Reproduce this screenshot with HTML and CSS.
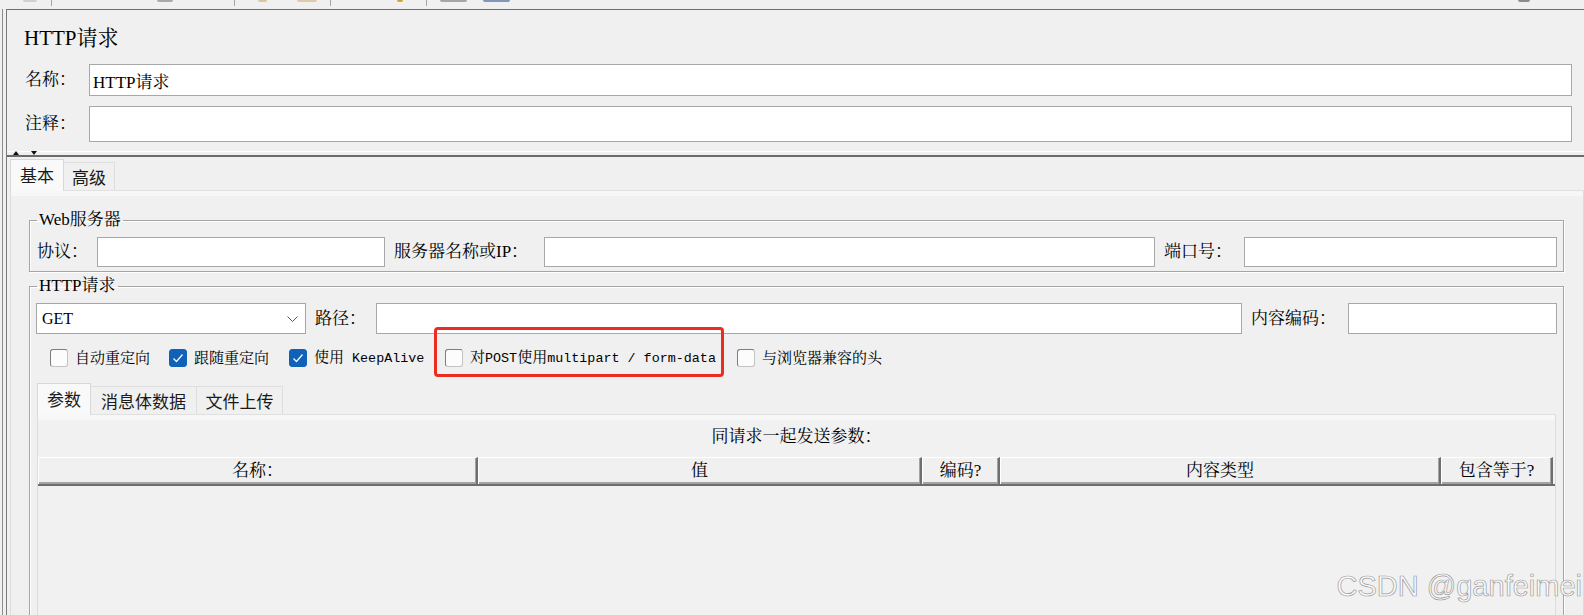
FILE: index.html
```html
<!DOCTYPE html>
<html>
<head>
    <title>HTTP请求</title>
    <meta http-equiv="content-type" content="text/html; charset=UTF-8"/>
    <link rel="stylesheet" href="styles.css">
</head>
<body>
<div class="toolbar">
    <span class="tool tool-new"></span>
    <span class="sep sep-file"></span>
    <span class="tool tool-save"></span>
    <span class="sep sep-edit"></span>
    <span class="tool tool-cut"></span>
    <span class="tool tool-copy"></span>
    <span class="sep sep-run"></span>
    <span class="tool tool-start"></span>
    <span class="sep sep-clear"></span>
    <span class="tool tool-clear"></span>
    <span class="tool tool-search"></span>
    <span class="tool tool-help"></span>
</div>
<div class="workspace">
    <div class="tree-edge"></div>
    <div class="pane">
        <div class="sampler-head">
            <h1 class="title">HTTP请求</h1>
            <div class="field-row name-row">
                <label>名称：</label>
                <input type="text" value="HTTP请求"/>
            </div>
            <div class="field-row comment-row">
                <label>注释：</label>
                <input type="text"/>
            </div>
        </div>
        <div class="splitter">
            <span class="arrow up"></span>
            <span class="arrow down"></span>
        </div>
        <div class="tab-strip">
            <span class="tab active tab-basic">基本</span>
            <span class="tab tab-advanced">高级</span>
        </div>
        <div class="tab-panel main-panel">
            <fieldset class="group web-server">
                <legend>Web服务器</legend>
                <div class="server-row">
                    <label>协议：</label>
                    <input type="text"/>
                    <label class="trailing">服务器名称或IP：</label>
                    <input type="text"/>
                    <label class="trailing">端口号：</label>
                    <input type="text"/>
                </div>
            </fieldset>
            <fieldset class="group http-request">
                <legend>HTTP请求</legend>
                <div class="path-row">
                    <div class="combo">
                        <span>GET</span>
                        <svg width="11" height="6" viewBox="0 0 11 6"><polyline points="0.5,0.5 5.5,5.5 10.5,0.5" fill="none" stroke="#555" stroke-width="1"/></svg>
                    </div>
                    <label class="trailing">路径：</label>
                    <input type="text"/>
                    <label class="trailing">内容编码：</label>
                    <input type="text"/>
                </div>
                <div class="option-row">
                    <label class="check"><span class="box"></span>自动重定向</label>
                    <label class="check"><span class="box on"><svg width="16" height="16" viewBox="0 0 16 16"><polyline points="3.5,8.5 6.5,11.5 12.5,4.5" fill="none" stroke="#fff" stroke-width="1.2"/></svg></span>跟随重定向</label>
                    <label class="check"><span class="box on"><svg width="16" height="16" viewBox="0 0 16 16"><polyline points="3.5,8.5 6.5,11.5 12.5,4.5" fill="none" stroke="#fff" stroke-width="1.2"/></svg></span><span>使用<span class="mono"> KeepAlive</span></span></label>
                    <label class="check marked"><span class="box"></span><span>对<span class="mono">POST</span>使用<span class="mono">multipart / form-data</span></span></label>
                    <label class="check"><span class="box"></span>与浏览器兼容的头</label>
                </div>
                <div class="subtabs">
                    <div class="tab-strip sub-strip">
                        <span class="tab active tab-params">参数</span>
                        <span class="tab tab-body">消息体数据</span>
                        <span class="tab tab-files">文件上传</span>
                    </div>
                    <div class="tab-panel params-panel">
                        <div class="caption">同请求一起发送参数：</div>
                        <div class="table-head">
                            <span>名称：</span>
                            <span>值</span>
                            <span>编码?</span>
                            <span>内容类型</span>
                            <span>包含等于?</span>
                        </div>
                    </div>
                </div>
            </fieldset>
        </div>
    </div>
</div>
<div class="watermark">CSDN @ganfeimei</div>
</body>
</html>
```
FILE: styles.css
```css
html {
    height: 100%;
}

body {
    position: relative;
    height: 615px;
    margin: 0;
    overflow: hidden;
    background-color: #f0f0f0;
    color: #000;
    font-family: "Liberation Serif", "Noto Serif CJK SC", "Noto Sans CJK SC", serif;
    font-size: 17px;
    line-height: 20px;
}

/* toolbar, only the lower edge of its icons shows */
.toolbar {
    display: flex;
    align-items: flex-start;
    height: 9px;
}

.tool {
    height: 2px;
    border-radius: 0 0 2px 2px;
}

.sep {
    width: 1px;
    height: 6px;
    background-color: #a3a3a3;
}

.tool-new { margin-left: 23px; width: 14px; background-color: #d0d0d0; }
.sep-file { margin-left: 14px; }
.tool-save { margin-left: 105px; width: 16px; background-color: #a9a9a9; }
.sep-edit { margin-left: 61px; }
.tool-cut { margin-left: 23px; width: 9px; background-color: #dcc6a2; }
.tool-copy { margin-left: 30px; width: 20px; background-color: #dfcaa8; }
.sep-run { margin-left: 13px; }
.tool-start { margin-left: 66px; width: 6px; background-color: #d2a62c; }
.sep-clear { margin-left: 23px; }
.tool-clear { margin-left: 13px; width: 27px; background-color: #a5a5a5; }
.tool-search { margin-left: 16px; width: 27px; background-color: #8396b8; }
.tool-help { margin-left: auto; margin-right: 54px; width: 12px; background-color: #8c8c8c; }

.workspace {
    display: flex;
    height: 606px;
}

.tree-edge {
    width: 2px;
    border-right: 1px solid #8c8c8c;
    margin-right: 3px;
}

.pane {
    flex: 1;
    min-width: 0;
    border-left: 1px solid #7a7a7a;
    border-top: 1px solid #6e6e6e;
    overflow: hidden;
}

input {
    box-sizing: border-box;
    height: 100%;
    margin: 0;
    padding: 0 3px;
    border: 1px solid #a8a8a8;
    background-color: #fff;
    font: inherit;
    outline: none;
}

/* name and comment */
.sampler-head {
    padding: 0 12px 0 17px;
}

.title {
    margin: 14px 0 0;
    font-size: 21px;
    line-height: 28px;
    font-weight: normal;
}

.field-row {
    display: grid;
    grid-template-columns: 65px 1fr;
    align-items: center;
}

.field-row label {
    padding-left: 1px;
}

.name-row {
    margin-top: 12px;
    height: 32px;
}

.comment-row {
    margin-top: 10px;
    height: 36px;
}

.splitter {
    position: relative;
    display: flex;
    align-items: flex-end;
    gap: 12px;
    margin-top: 1px;
    height: 12px;
    padding-left: 6px;
    border-bottom: 2px solid #6b6b6b;
}

.splitter::before {
    content: "";
    position: absolute;
    left: 0;
    right: 0;
    top: 8px;
    height: 1px;
    background-color: #fff;
}

.arrow {
    position: relative;
    width: 0;
    height: 0;
    border-left: 3px solid transparent;
    border-right: 3px solid transparent;
}

.arrow.up { border-bottom: 4px solid #111; }
.arrow.down { border-top: 4px solid #111; }

/* tabs */
.tab-strip {
    display: flex;
    align-items: flex-end;
    height: 33px;
    margin-left: 3px;
}

.tab {
    box-sizing: border-box;
    height: 28px;
    line-height: 27px;
    text-align: center;
    font-family: "Noto Sans CJK SC", sans-serif;
    font-size: 17px;
    color: #1a1a1a;
    background-color: #f0f0f0;
    border: 1px solid #dedede;
    border-left: none;
    border-bottom: none;
}

.tab.active {
    position: relative;
    height: 32px;
    line-height: 30px;
    margin-bottom: -1px;
    background-color: #f9f9f9;
    border-left: 1px solid #d8d8d8;
    border-color: #d8d8d8;
}

.tab-basic { width: 54px; }
.tab-advanced { width: 51px; }
.tab-params { width: 54px; }
.tab-body { width: 106px; }
.tab-files { width: 86px; }

.tab-panel {
    border: 1px solid #dcdcdc;
    border-top-color: #e0e0e0;
    box-shadow: inset 0 5px 0 #f7f7f7;
}

.main-panel {
    margin-left: 3px;
    height: 430px;
    padding: 0 19px 0 18px;
}

/* etched group boxes */
.group {
    min-width: 0;
    margin: 0;
    padding: 7px 6px 4px 7px;
    border: 1px solid #a5a5a5;
    box-shadow: 1px 1px 0 #fff, inset 1px 1px 0 #fff;
}

.group legend {
    padding: 0 2px;
    line-height: 20px;
}

.web-server {
    margin-top: 19px;
}

.http-request {
    margin-top: 4px;
    padding-bottom: 0;
}

.server-row {
    display: grid;
    grid-template-columns: 60px 288px 159px 611px 89px 313px;
    align-items: center;
    height: 30px;
}

label.trailing {
    padding-left: 9px;
}

.path-row {
    display: grid;
    grid-template-columns: 270px 70px 866px 106px 209px;
    align-items: center;
    height: 31px;
    margin-left: -1px;
}

.combo {
    box-sizing: border-box;
    display: flex;
    align-items: center;
    justify-content: space-between;
    height: 100%;
    padding: 0 7px 0 5px;
    border: 1px solid #a5a5a5;
    background-color: #fff;
    font-size: 16px;
}

.option-row {
    display: grid;
    grid-template-columns: 119px 120px 156px 292px auto;
    align-items: center;
    height: 36px;
    margin: 6px 0 0 13px;
    font-size: 15px;
}

.check {
    position: relative;
    display: flex;
    align-items: center;
    gap: 7px;
    line-height: 18px;
    white-space: nowrap;
}

.mono {
    font-family: "Liberation Mono", monospace;
    font-size: 13.4px;
}

.box {
    box-sizing: border-box;
    display: flex;
    align-items: center;
    justify-content: center;
    width: 18px;
    height: 18px;
    border: 1px solid;
    border-color: #7d7d7d #c4c4c4 #c4c4c4 #7d7d7d;
    border-radius: 3px;
    background-color: #fcfcfc;
}

.box.on {
    border-color: #0f62b8;
    background-color: #0f62b8;
}

.marked::after {
    content: "";
    position: absolute;
    left: -11px;
    top: -21px;
    right: 13px;
    bottom: -9px;
    border: 3px solid #ee2b20;
    border-radius: 4px;
}

.subtabs {
    margin: 7px 1px 0 0;
}

.sub-strip {
    height: 31px;
    margin-left: 0;
}

.params-panel {
    height: 300px;
    padding-top: 10px;
    background-color: #f1f1f1;
}

.caption {
    text-align: center;
    line-height: 24px;
}

.table-head {
    box-sizing: border-box;
    display: grid;
    grid-template-columns: 440px 444px 78px 441px 112px;
    height: 29px;
    margin-top: 8px;
    border-bottom: 2px solid #6d6d6d;
}

.table-head span {
    border-top: 1px solid #fff;
    border-left: 1px solid #fff;
    border-right: 2px solid #6f6f6f;
    box-shadow: inset -1px -2px 0 #a3a3a3;
    background-color: #f0f0f0;
    text-align: center;
    line-height: 26px;
}

.watermark {
    position: absolute;
    right: 2px;
    top: 572px;
    font-family: "Liberation Sans", sans-serif;
    font-size: 29px;
    line-height: 29px;
    color: #fbfbfb;
    -webkit-text-stroke: 0.7px #9c9c9c;
}
```
